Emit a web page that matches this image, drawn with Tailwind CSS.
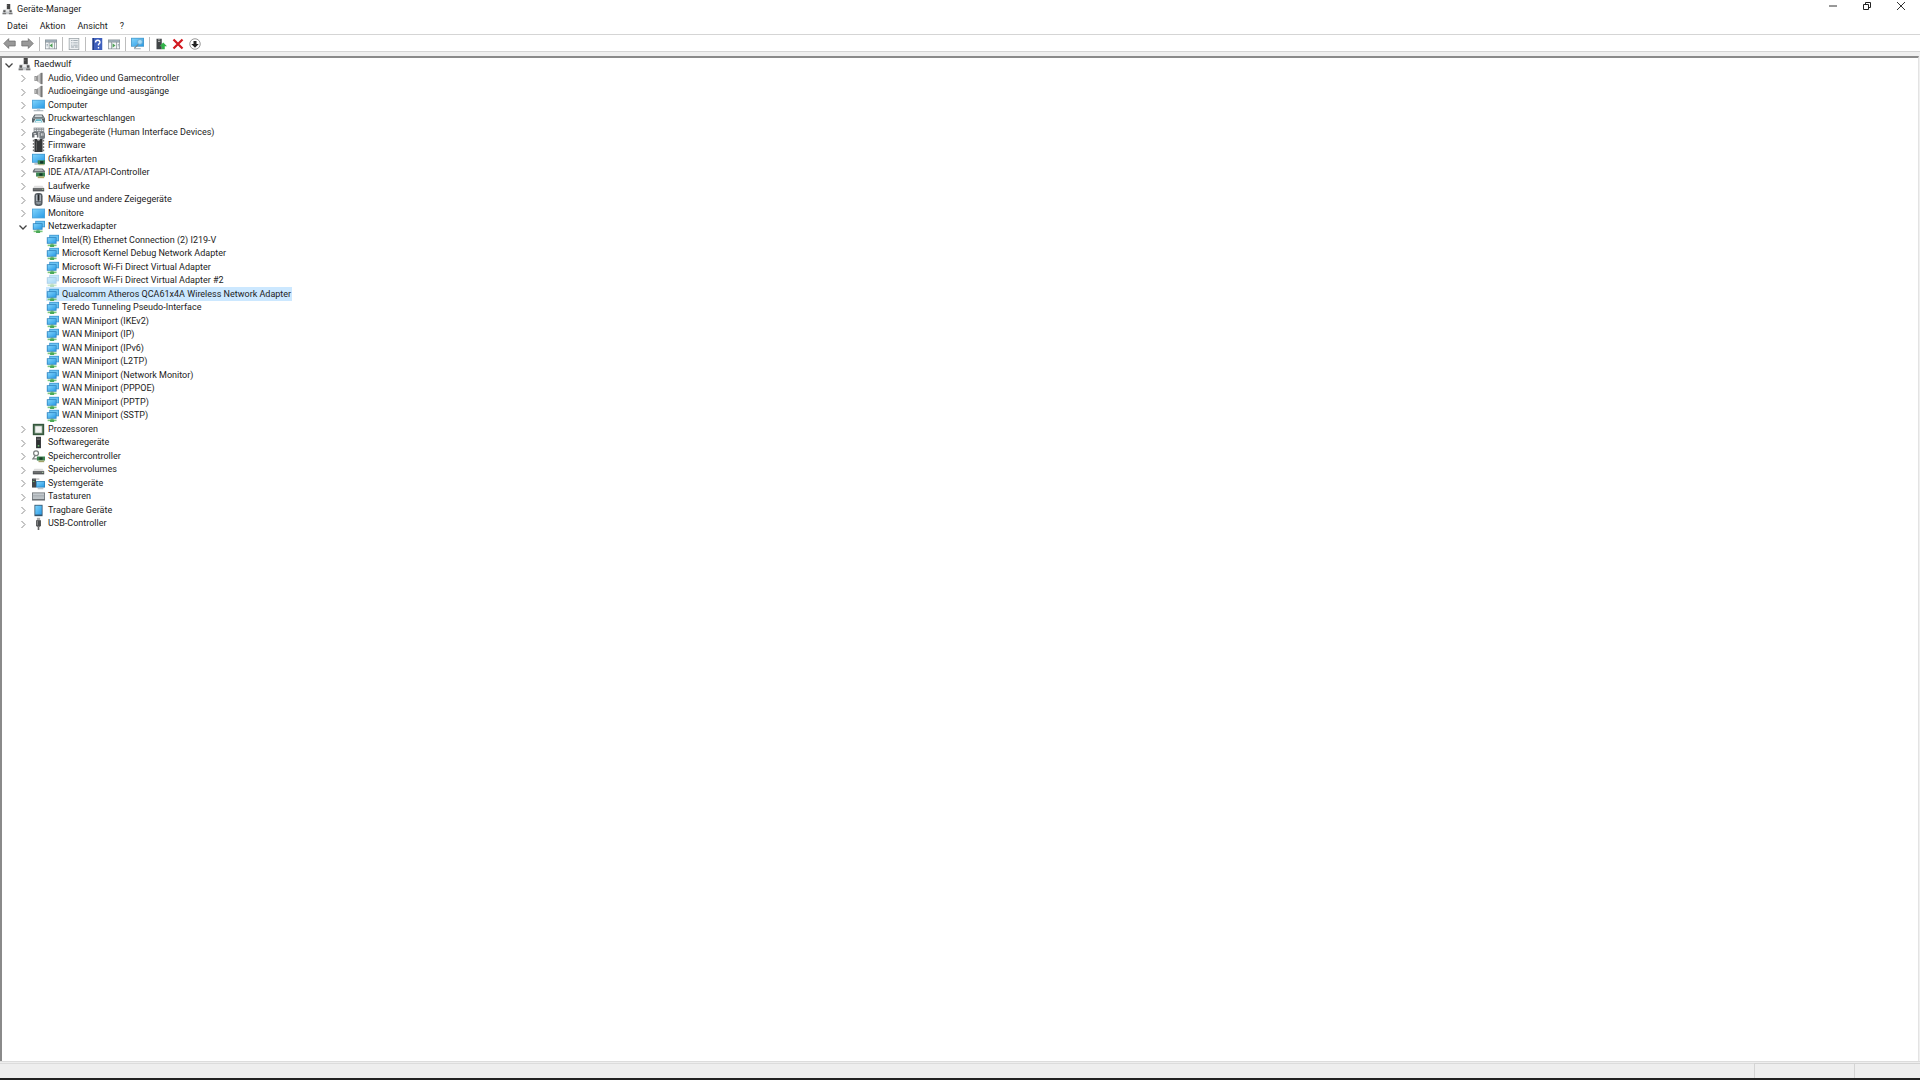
<!DOCTYPE html>
<html lang="de">
<head>
  <meta charset="UTF-8" />
  <meta name="viewport" content="width=device-width, initial-scale=1.0"/>
  <title>Geräte-Manager</title>
  <script src="https://cdn.jsdelivr.net/npm/@tailwindcss/browser@4"></script>
</head>
<body class="h-screen flex flex-col bg-white overflow-hidden font-['Roboto',sans-serif] text-[9px] leading-[13px] text-[#1c1c1c]">

  <!-- Icon set -->
  <svg class="absolute size-0">
    <defs>
      <linearGradient id="blue" x1="0" y1="0" x2="1" y2="1"><stop offset="0" stop-color="#7fd3fb"/><stop offset="1" stop-color="#2a9be6"/></linearGradient>
      <linearGradient id="metal" x1="0" y1="0" x2="1" y2="0"><stop offset="0" stop-color="#777"/><stop offset=".5" stop-color="#d8d8d8"/><stop offset="1" stop-color="#888"/></linearGradient>
    </defs>
    <symbol id="i-manager" viewBox="0 0 16 16">
      <path d="M7 0h5v8H7z" fill="#444"/><path d="M8 2h1v1H8z" fill="#aaa"/>
      <path d="M2 8h12l2 7H0z" fill="#c9cccf"/><path d="M2 9h3v3H2zM11 9h3v3h-3z" fill="#555"/>
      <path d="M1 13h5v2H1zM10 13h5v2h-5z" fill="#777"/><path d="M6 8h4v3H6z" fill="#eee"/>
    </symbol>
    <symbol id="i-audio" viewBox="0 0 16 16">
      <path d="M3 5h3v6H3z" fill="#8d8d8d"/><path d="M4 6h1v4H4z" fill="#ccc"/><path d="M6 5l5-4v14l-5-4z" fill="url(#metal)"/><path d="M11 1h2v14h-2z" fill="#777"/>
    </symbol>
    <symbol id="i-computer" viewBox="0 0 16 16">
      <path d="M0 1h16v11H0z" fill="#4fa3d8"/><path d="M1 2h14v9H1z" fill="url(#blue)"/><path d="M6 12h4v2H6z" fill="#c3ced6"/><path d="M2 14h12v1H2z" fill="#8797a3"/>
    </symbol>
    <symbol id="i-printer" viewBox="0 0 16 16">
      <path d="M3 3h10l3 5v5h-2l-2-4H4l-2 4H0V8z" fill="#5b6469"/><path d="M4 4h8l1 2H3z" fill="#cfd5d8"/><path d="M1 7h14v1H1z" fill="#b9c1c5"/><path d="M5 9h6l2 4H3z" fill="#5fb5c6"/><path d="M5 11h6l1 2H4z" fill="#e4f3f6"/>
    </symbol>
    <symbol id="i-hid" viewBox="0 0 16 16">
      <path d="M2 2h13v6H2z" fill="#8a8f93"/><path d="M3 3h2v1H3zM6 3h2v1H6zM9 3h2v1H9zM12 3h2v1h-2zM3 5h2v1H3zM6 5h2v1H6zM9 5h2v1H9zM12 5h2v1h-2z" fill="#e4e7e9"/>
      <path d="M0 14V9q0-2 3-2h3q2 0 2 2v5H6v-3H3v3z" fill="#6b7074"/><path d="M9 15V9q0-2 3-2 4 0 4 3v4q0 2-3 2-4 0-4-1z" fill="#777d82"/><path d="M11 9h1v3h-1zM13 9h1v3h-1zM2 9h3v1H2z" fill="#eee"/>
    </symbol>
    <symbol id="i-firmware" viewBox="0 0 16 16">
      <path d="M3 0h10v16H3z" fill="#343638"/><path d="M1 1h2v2H1zM1 5h2v2H1zM1 9h2v2H1zM1 13h2v2H1zM13 1h2v2h-2zM13 5h2v2h-2zM13 9h2v2h-2zM13 13h2v2h-2z" fill="#777"/><path d="M6 0h4q0 2-2 2T6 0" fill="#bbb"/><path d="M5 3h1v11H5z" fill="#666"/>
    </symbol>
    <symbol id="i-display" viewBox="0 0 16 16">
      <path d="M0 1h16v11H0z" fill="#4097cf"/><path d="M1 2h14v9H1z" fill="url(#blue)"/><path d="M7 9h9v5H7z" fill="#3b8551"/><path d="M10 10h4v3h-4z" fill="#17352a"/><path d="M8 14h7v1H8z" fill="#b2a866"/><path d="M3 13h4v1H3z" fill="#68757c"/>
    </symbol>
    <symbol id="i-ide" viewBox="0 0 16 16">
      <path d="M3 3h10l3 3v2H1V6z" fill="#6c7276"/><path d="M4 4h8l2 2H3z" fill="#b5babd"/><path d="M5 8h11v5H5z" fill="#3b8551"/><path d="M9 9h4v3H9z" fill="#16382a"/><path d="M7 13h8v2H7z" fill="#b2a866"/>
    </symbol>
    <symbol id="i-drive" viewBox="0 0 16 16">
      <path d="M3 7h10l2 3H1z" fill="#dedede"/><path d="M1 10h14v4H1z" fill="#55585a"/><path d="M2 11h9v1H2z" fill="#777"/><path d="M12 11h2v1h-2z" fill="#b9dfb0"/>
    </symbol>
    <symbol id="i-mouse" viewBox="0 0 16 16">
      <rect x="3" y="0" width="10" height="16" rx="4" fill="#555c62"/><path d="M5 2h2v8H5zM9 2h2v8H9z" fill="#b4bcc2"/><path d="M7 2h2v7H7z" fill="#24282b"/><path d="M5 11h6v2q-3 2-6 0z" fill="#899299"/>
    </symbol>
    <symbol id="i-monitor" viewBox="0 0 16 16">
      <path d="M0 2h16v12H0z" fill="#4fa3d8"/><path d="M1 3h14v10H1z" fill="url(#blue)"/>
    </symbol>
    <symbol id="i-network" viewBox="0 0 16 16">
      <path d="M4 1h12v8H4z" fill="#3f97d0"/><path d="M5 2h10v6H5z" fill="#6cc4f3"/><path d="M1 4h12v8H1z" fill="#2d83bf"/><path d="M2 5h10v6H2z" fill="url(#blue)"/><path d="M6 12h3v1H6z" fill="#3c9c50"/><path d="M2 13h11v2H2z" fill="#7cc77c"/><path d="M5 13h5v3H5z" fill="#4ba957"/>
    </symbol>
    <symbol id="i-cpu" viewBox="0 0 16 16">
      <path d="M1 1h14v14H1z" fill="#35573d"/><path d="M3 3h10v10H3z" fill="#7f9a84"/><path d="M4 4h8v8H4z" fill="#f0f2f0"/>
    </symbol>
    <symbol id="i-software" viewBox="0 0 16 16">
      <path d="M5 1h6v14H5z" fill="#2e3133"/><path d="M6 2h4v1H6zM6 4h4v1H6z" fill="#777"/><path d="M7 11h2v2H7z" fill="#65b96d"/>
    </symbol>
    <symbol id="i-storage" viewBox="0 0 16 16">
      <circle cx="5" cy="4" r="3" fill="#fff" stroke="#7c8080" stroke-width="1.500"/><path d="M4 7l-3 4h5" fill="none" stroke="#7c8080" stroke-width="1.500"/><path d="M6 8h10v5H6z" fill="#3d8450"/><path d="M9 9h4v3H9z" fill="#1d3e29"/><path d="M8 13h7v2H8z" fill="#a4a56b"/>
    </symbol>
    <symbol id="i-system" viewBox="0 0 16 16">
      <path d="M0 2h5v11H0z" fill="#41474b"/><path d="M1 2h8v1H1z" fill="#888"/><path d="M1 5h2v1H1z" fill="#80d080"/><path d="M5 5h11v8H5z" fill="#2c80b8"/><path d="M6 6h9v6H6z" fill="url(#blue)"/><path d="M7 14h7v1H7z" fill="#93a2ac"/>
    </symbol>
    <symbol id="i-keyboard" viewBox="0 0 16 16">
      <path d="M0 3h16v10H0z" fill="#6d7276"/><path d="M1 4h14v7H1z" fill="#c3c9cd"/><path d="M1 6h14v1H1zM1 8h14v1H1z" fill="#a5abb0"/>
    </symbol>
    <symbol id="i-portable" viewBox="0 0 16 16">
      <path d="M3 1h10v14H3z" fill="#35536a"/><path d="M4 2h8v11H4z" fill="url(#blue)"/>
    </symbol>
    <symbol id="i-usb" viewBox="0 0 16 16">
      <path d="M6 1h4v4H6z" fill="#aaa"/><path d="M5 4h6v6l-1 2H6l-1-2z" fill="#4c4f51"/><path d="M7 12h2v4H7z" fill="#666"/><path d="M6 5h1v5H6z" fill="#999"/>
    </symbol>

    <!-- Toolbar icons -->
    <symbol id="t-back" viewBox="0 0 16 16"><path d="M1 8l6-6v3h8v6H7v3z" fill="#999" stroke="#707070"/></symbol>
    <symbol id="t-forward" viewBox="0 0 16 16"><path d="M15 8L9 2v3H1v6h8v3z" fill="#999" stroke="#707070"/></symbol>
    <symbol id="t-console" viewBox="0 0 16 16">
      <path d="M0 2h16v13H0z" fill="#8a9399"/><path d="M1 3h14v2H1z" fill="#9fb0bc"/><path d="M1 6h4v8H1zM6 6h6v8H6zM13 6h2v8h-2z" fill="#f3f6f7"/><path d="M10 7v6l-4-3z" fill="#4fa057"/><path d="M2 8h2v1H2zM2 10h2v1H2z" fill="#8799a5"/>
    </symbol>
    <symbol id="t-properties" viewBox="0 0 16 16">
      <path d="M1 0h14v16H1z" fill="#9aa1a6"/><path d="M2 1h12v14H2z" fill="#edf0f2"/><path d="M7 3h6v1H7zM7 6h6v1H7zM7 9h6v1H7zM4 3h2v1H4zM4 6h2v1H4zM4 9h2v1H4z" fill="#8d99a2"/><path d="M4 11h4v2H4zM9 11h4v2H9z" fill="#b3bbc1"/>
    </symbol>
    <symbol id="t-help" viewBox="0 0 16 16">
      <path d="M2 0h13v16H2z" fill="#3f60bd"/><path d="M2 0h2v16H2z" fill="#223d86"/><path d="M6 6q0-3 3-3t3 3q0 1-2 2.500V10M10 12v2" fill="none" stroke="#fff" stroke-width="1.800"/>
    </symbol>
    <symbol id="t-action" viewBox="0 0 16 16">
      <path d="M0 2h16v13H0z" fill="#8a9399"/><path d="M1 3h14v2H1z" fill="#9fb0bc"/><path d="M1 6h3v8H1zM5 6h6v8H5zM12 6h3v8h-3z" fill="#f3f6f7"/><path d="M6 7v6l4-3z" fill="#4fa057"/><path d="M13 8h2v1h-2zM13 10h2v1h-2z" fill="#8799a5"/>
    </symbol>
    <symbol id="t-scan" viewBox="0 0 16 16">
      <path d="M0 1h16v11H0z" fill="#4a9bcd"/><path d="M1 2h14v9H1z" fill="url(#blue)"/><circle cx="11" cy="6" r="3" fill="#a5dcf8" stroke="#6fa8ca"/><path d="M9 9l-5 5" stroke="#718895" stroke-width="1.500"/><path d="M4 14h8v1H4z" fill="#8798a3"/>
    </symbol>
    <symbol id="t-update" viewBox="0 0 16 16">
      <path d="M2 1h7v14H2z" fill="#414547"/><path d="M4 2h3v1H4zM4 4h3v1H4z" fill="#ccc"/><path d="M11 6l5 5h-3v4H9v-4H6z" fill="#32b34a"/>
    </symbol>
    <symbol id="t-uninstall" viewBox="0 0 16 16"><path d="M2 2l12 12M14 2L2 14" stroke="#d11920" stroke-width="3"/></symbol>
    <symbol id="t-disable" viewBox="0 0 16 16"><circle cx="8" cy="8" r="7" fill="#fff" stroke="#777"/><path d="M6 4h4v4h3l-5 5-5-5h3z" fill="#222"/></symbol>
  </svg>

  <!-- Title bar -->
  <header class="flex h-[18px] shrink-0 items-center pl-[2px] pr-[14px]">
    <svg class="size-[11px] mr-1"><use href="#i-manager"/></svg>
    <h1>Geräte-Manager</h1>
    <div class="ml-auto flex h-4 items-start gap-[24px]">
      <button aria-label="Minimieren"><svg class="size-[10px]" viewBox="0 0 10 10"><path d="M1 5h8" stroke="#333"/></svg></button>
      <button aria-label="Wiederherstellen"><svg class="size-[10px]" viewBox="0 0 10 10" fill="none" stroke="#222"><path d="M1.500 3.500h5v5h-5zM3.500 3V1.500h5v5H7"/></svg></button>
      <button aria-label="Schließen"><svg class="size-[10px]" viewBox="0 0 10 10"><path d="M1 1l8 8M9 1L1 9" stroke="#333"/></svg></button>
    </div>
  </header>

  <!-- Menu -->
  <nav class="flex h-4 shrink-0 items-center gap-3 pl-[7px]">
    <button>Datei</button>
    <button>Aktion</button>
    <button>Ansicht</button>
    <button>?</button>
  </nav>

  <!-- Toolbar -->
  <div class="flex h-[18px] shrink-0 items-center gap-[5px] border-y border-[#d5d5d5] pl-[3px] pt-px" role="toolbar">
    <button aria-label="Zurück"><svg class="size-[13px]"><use href="#t-back"/></svg></button>
    <button aria-label="Vorwärts"><svg class="size-[13px]"><use href="#t-forward"/></svg></button>
    <span class="h-[14px] w-px bg-[#bdbdbd]"></span>
    <button aria-label="Konsolenstruktur"><svg class="size-[12px]"><use href="#t-console"/></svg></button>
    <span class="h-[14px] w-px bg-[#bdbdbd]"></span>
    <button aria-label="Eigenschaften"><svg class="size-[12px]"><use href="#t-properties"/></svg></button>
    <span class="h-[14px] w-px bg-[#bdbdbd]"></span>
    <button aria-label="Hilfe"><svg class="size-[12px]"><use href="#t-help"/></svg></button>
    <button aria-label="Aktionsbereich"><svg class="size-[12px]"><use href="#t-action"/></svg></button>
    <span class="h-[14px] w-px bg-[#bdbdbd]"></span>
    <button aria-label="Nach geänderter Hardware suchen"><svg class="size-[13px]"><use href="#t-scan"/></svg></button>
    <span class="h-[14px] w-px bg-[#bdbdbd]"></span>
    <button aria-label="Treiber aktualisieren"><svg class="size-[12px]"><use href="#t-update"/></svg></button>
    <button aria-label="Gerät deinstallieren"><svg class="size-[12px]"><use href="#t-uninstall"/></svg></button>
    <button aria-label="Gerät deaktivieren"><svg class="size-[12px]"><use href="#t-disable"/></svg></button>
  </div>

  <!-- Device tree -->
  <main class="flex flex-1 flex-col bg-[#f0f0f0] pt-1">
    <div class="mr-px flex-1 border-l-2 border-t-2 border-r border-[#8a8a8a] border-r-[#e3e3e3] bg-white">
      <ul id="tree" role="tree"></ul>
    </div>
  </main>

  <!-- Status bar -->
  <footer class="flex h-[19px] shrink-0 border-t border-b-2 border-t-[#dcdcdc] border-b-[#222] bg-[#eeeeee] pt-px">
    <div class="flex-1 border-t border-[#dcdcdc]"></div>
    <div class="w-[100px] border-l border-t border-[#d4d4d4]"></div>
    <div class="w-[66px] border-l border-t border-[#d4d4d4]"></div>
  </footer>

  <script>
    // [level, icon, name, state]
    const devices = [
      [0, "manager", "Raedwulf", "open"],
      [1, "audio", "Audio, Video und Gamecontroller"],
      [1, "audio", "Audioeingänge und -ausgänge"],
      [1, "computer", "Computer"],
      [1, "printer", "Druckwarteschlangen"],
      [1, "hid", "Eingabegeräte (Human Interface Devices)"],
      [1, "firmware", "Firmware"],
      [1, "display", "Grafikkarten"],
      [1, "ide", "IDE ATA/ATAPI-Controller"],
      [1, "drive", "Laufwerke"],
      [1, "mouse", "Mäuse und andere Zeigegeräte"],
      [1, "monitor", "Monitore"],
      [1, "network", "Netzwerkadapter", "open"],
      [2, "network", "Intel(R) Ethernet Connection (2) I219-V"],
      [2, "network", "Microsoft Kernel Debug Network Adapter"],
      [2, "network", "Microsoft Wi-Fi Direct Virtual Adapter"],
      [2, "network", "Microsoft Wi-Fi Direct Virtual Adapter #2", "hidden"],
      [2, "network", "Qualcomm Atheros QCA61x4A Wireless Network Adapter", "selected"],
      [2, "network", "Teredo Tunneling Pseudo-Interface"],
      [2, "network", "WAN Miniport (IKEv2)"],
      [2, "network", "WAN Miniport (IP)"],
      [2, "network", "WAN Miniport (IPv6)"],
      [2, "network", "WAN Miniport (L2TP)"],
      [2, "network", "WAN Miniport (Network Monitor)"],
      [2, "network", "WAN Miniport (PPPOE)"],
      [2, "network", "WAN Miniport (PPTP)"],
      [2, "network", "WAN Miniport (SSTP)"],
      [1, "cpu", "Prozessoren"],
      [1, "software", "Softwaregeräte"],
      [1, "storage", "Speichercontroller"],
      [1, "drive", "Speichervolumes"],
      [1, "system", "Systemgeräte"],
      [1, "keyboard", "Tastaturen"],
      [1, "portable", "Tragbare Geräte"],
      [1, "usb", "USB-Controller"],
    ];

    const indent = ["pl-[2px]", "pl-[16px]", "pl-[31px]"];

    function chevron(name, open) {
      const path = open
        ? '<path d="M1.500 3.500L5 7l3.500-3.500" stroke="#444" stroke-width="1.300"/>'
        : '<path d="M3.500 2L7 5.500 3.500 9" stroke="#8c8c8c"/>';
      return `<button aria-label="${name} ${open ? "reduzieren" : "erweitern"}"><svg class="size-[10px]" viewBox="0 0 10 10" fill="none">${path}</svg></button>`;
    }

    document.getElementById("tree").innerHTML = devices.map(([level, icon, name, state]) => `
      <li role="treeitem" aria-level="${level + 1}" class="flex items-center odd:h-[13px] even:h-[14px] ${indent[level]}">
        <span class="flex w-[14px] shrink-0 ${level == 2 ? "hidden" : ""}">${chevron(name, state == "open")}</span>
        <span class="flex h-full items-center gap-[3px] pr-px ${level == 2 ? "ml-[13px]" : ""} ${state == "selected" ? "bg-[#cce8ff]" : ""}">
          <svg class="size-[13px] shrink-0 ${state == "hidden" ? "opacity-40" : ""}"><use href="#i-${icon}"/></svg>
          <span class="whitespace-nowrap">${name}</span>
        </span>
      </li>`).join("");
  </script>

</body>
</html>
